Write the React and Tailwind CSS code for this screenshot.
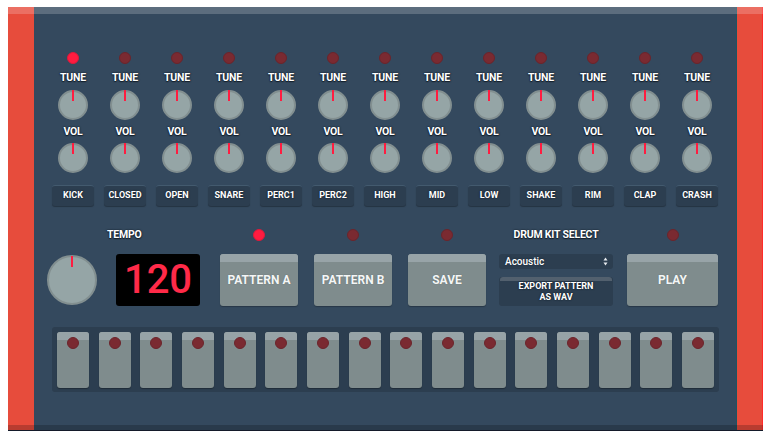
import React from "react";

const channels = ["KICK","CLOSED","OPEN","SNARE","PERC1","PERC2","HIGH","MID","LOW","SHAKE","RIM","CLAP","CRASH"];

const label = "font-bold text-white text-[10.5px] leading-[14px] tracking-[-0.2px] [text-shadow:0_0_1px_#15202b,0_0_2px_#15202b,0_1px_1px_#15202b]";

function Led({ on }) {
  return on ? (
    <div className="w-[12px] h-[12px] rounded-full bg-[#ff1c40] border border-[#e0183a]" />
  ) : (
    <div className="w-[12px] h-[12px] rounded-full bg-[#7a2a31] border border-[#6b242b]" />
  );
}

function SmallKnob() {
  return (
    <div className="relative w-[30px] h-[30px] rounded-full bg-[#95a5a6] border-2 border-[#828f90]">
      <div className="absolute left-1/2 -translate-x-1/2 top-[-2px] w-[2px] h-[11px] bg-[#ff1c40]" />
    </div>
  );
}

function BigKnob() {
  return (
    <div className="relative w-[50px] h-[50px] rounded-full bg-[#95a5a6] border-2 border-[#828f90]">
      <div className="absolute left-1/2 -translate-x-1/2 top-[-1px] w-[2px] h-[11px] bg-[#ff1c40]" />
    </div>
  );
}

function GrayButton({ children, w }) {
  return (
    <div className={`${w} h-[52px] rounded-[3px] bg-[#7f8c8d] overflow-hidden flex flex-col shadow-[0_1px_1px_rgba(0,0,0,0.25)]`}>
      <div className="h-[8px] bg-[#98a4a8]" />
      <div className="flex-1 flex items-center justify-center pb-[8px] font-bold text-[12px] text-[#f4f6f6] [text-shadow:0_0_1px_#5a6566]">
        {children}
      </div>
    </div>
  );
}

export default function App() {
  return (
    <div className="w-[770px] h-[437px] bg-white pt-[7px] pl-[8px]" style={{ fontFamily: "Roboto, 'Liberation Sans', sans-serif" }}>
      <div className="relative flex w-[755px] h-[424px] border-b border-[#141a2a]">
        <div className="w-[26px] bg-[#e74c3c]" />
        <div className="w-[702px] bg-[#34495e] px-[13px] pt-[45px]">
          <div className="grid grid-cols-[repeat(13,52px)]">
            {channels.map((c, i) => (
              <div key={c} className="flex flex-col items-center">
                <Led on={i === 0} />
                <div className={`${label} mt-[7px]`}>TUNE</div>
                <div className="mt-[5px]"><SmallKnob /></div>
                <div className={`${label} mt-[5px]`}>VOL</div>
                <div className="mt-[4px]"><SmallKnob /></div>
                <div className="mt-[12px] w-[42px] h-[21px] rounded-[3px] bg-[#2c3e50] border-t border-[#435a6e] shadow-[0_1px_1px_rgba(0,0,0,0.3)] flex items-center justify-center font-bold text-[9px] text-white [text-shadow:0_0_1px_#15202b,0_0_2px_#15202b]">
                  {c}
                </div>
              </div>
            ))}
          </div>

          <div className="flex mt-[23px]">
            <div className="flex flex-col w-[153px]">
              <div className="h-[12px] flex items-center">
                <span className={`${label} ml-[60px]`}>TEMPO</span>
              </div>
              <div className="mt-[13px] flex items-center gap-[19px] h-[52px]">
                <BigKnob />
                <div className="w-[84px] h-[52px] bg-black rounded-[3px] flex items-center justify-center text-[40px] font-medium leading-none text-[#ff2a48]">
                  120
                </div>
              </div>
            </div>
            <div className="ml-[20px] flex flex-col items-center">
              <Led on />
              <div className="mt-[13px]"><GrayButton w="w-[78px]">PATTERN A</GrayButton></div>
            </div>
            <div className="ml-[16px] flex flex-col items-center">
              <Led />
              <div className="mt-[13px]"><GrayButton w="w-[78px]">PATTERN B</GrayButton></div>
            </div>
            <div className="ml-[16px] flex flex-col items-center">
              <Led />
              <div className="mt-[13px]"><GrayButton w="w-[78px]">SAVE</GrayButton></div>
            </div>
            <div className="ml-[13px] w-[114px] flex flex-col">
              <div className="h-[12px] flex items-center justify-center">
                <span className={label}>DRUM KIT SELECT</span>
              </div>
              <div className="mt-[13px] h-[15px] rounded-[3px] bg-[#2c3e50] flex items-center justify-between pl-[6px] pr-[5px]">
                <span className="text-[10px] font-medium text-white [text-shadow:0_0_2px_#15202b]">Acoustic</span>
                <svg width="5" height="9" viewBox="0 0 5 9">
                  <path d="M2.5 0.5 L4.5 3.5 L0.5 3.5 Z" fill="#e8ecef" />
                  <path d="M2.5 8.5 L4.5 5.5 L0.5 5.5 Z" fill="#e8ecef" />
                </svg>
              </div>
              <div className="mt-[8px] h-[29px] rounded-[3px] bg-[#2c3e50] overflow-hidden flex flex-col">
                <div className="h-[6px] mx-[1px] bg-[#52606e] rounded-t-[3px]" />
                <div className="flex-1 flex flex-col items-center justify-center pb-[3px] font-bold text-[9px] leading-[11px] text-white [text-shadow:0_0_1px_#15202b,0_0_2px_#15202b]">
                  <span>EXPORT PATTERN</span>
                  <span>AS WAV</span>
                </div>
              </div>
            </div>
            <div className="ml-[14px] flex flex-col items-center">
              <Led />
              <div className="mt-[13px]"><GrayButton w="w-[91px]">PLAY</GrayButton></div>
            </div>
          </div>

          <div className="mt-[21px] ml-[5px] w-[667px] h-[65px] rounded-[3px] bg-[#2c3e50] pt-[5px] px-[5px] flex justify-between">
            {Array.from({ length: 16 }).map((_, i) => (
              <div key={i} className="relative w-[32px] h-[56px] rounded-[3px] bg-[#7f8c8d] overflow-hidden shadow-[0_1px_1px_rgba(0,0,0,0.3)]">
                <div className="h-[8px] bg-[#97a3a7]" />
                <div className="absolute left-1/2 -translate-x-1/2 top-[5px] w-[12px] h-[12px] rounded-full bg-[#7a2a31] border border-[#6b242b]" />
              </div>
            ))}
          </div>
        </div>
        <div className="w-[27px] bg-[#e74c3c] border-l border-l-[#1c5563] border-r border-r-[#ff2a2a]" />
        <div className="absolute inset-x-0 top-0 h-[7px] bg-white/20" />
        <div className="absolute inset-x-0 bottom-0 h-[5px] bg-black/20" />
      </div>
    </div>
  );
}
